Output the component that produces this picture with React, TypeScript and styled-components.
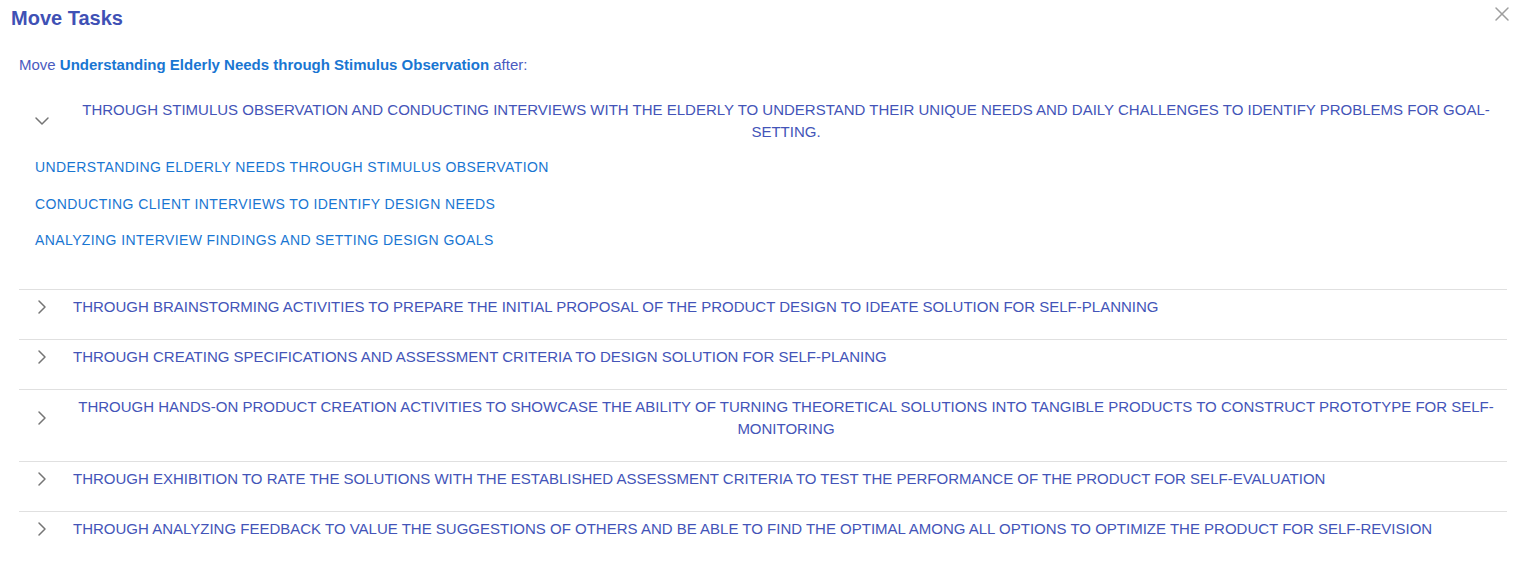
import React, { useState } from 'react';
import styled, { createGlobalStyle } from 'styled-components';
import { ChevronRight, X } from 'lucide-react';

const GlobalStyle = createGlobalStyle`
  body {
    margin: 0;
    background: #fff;
    font-family: "Liberation Sans", Arial, sans-serif;
  }
`;

type Group = {
  id: number;
  title: string;
  tasks: string[];
};

const groups: Group[] = [
  {
    id: 1,
    title:
      'Through stimulus observation and conducting interviews with the elderly to understand their unique needs and daily challenges to identify problems for goal-setting.',
    tasks: [
      'Understanding Elderly Needs through Stimulus Observation',
      'Conducting Client Interviews to Identify Design Needs',
      'Analyzing Interview Findings and Setting Design Goals',
    ],
  },
  {
    id: 2,
    title:
      'Through brainstorming activities to prepare the initial proposal of the product design to ideate solution for self-planning',
    tasks: [],
  },
  {
    id: 3,
    title: 'Through creating specifications and assessment criteria to design solution for self-planing',
    tasks: [],
  },
  {
    id: 4,
    title:
      'Through hands-on product creation activities to showcase the ability of turning theoretical solutions into tangible products to construct prototype for self-monitoring',
    tasks: [],
  },
  {
    id: 5,
    title:
      'Through exhibition to rate the solutions with the established assessment criteria to test the performance of the product for self-evaluation',
    tasks: [],
  },
  {
    id: 6,
    title:
      'Through analyzing feedback to value the suggestions of others and be able to find the optimal among all options to optimize the product for self-revision',
    tasks: [],
  },
];

const App = () => {
  const [open, setOpen] = useState<number | null>(1);

  return (
    <>
      <GlobalStyle />
      <Dialog>
        <Header>
          <Title>Move Tasks</Title>
          <CloseButton aria-label="close">
            <X size={24} strokeWidth={1.5} />
          </CloseButton>
        </Header>
        <Body>
          <Intro>
            Move <strong>Understanding Elderly Needs through Stimulus Observation</strong> after:
          </Intro>
          <Accordion>
            {groups.map((g, idx) => (
              <Panel key={g.id} first={idx === 0}>
                <Summary onClick={() => setOpen(open === g.id ? null : g.id)}>
                  <Chevron expanded={open === g.id}>
                    <ChevronRight size={24} strokeWidth={1.5} />
                  </Chevron>
                  <SummaryText>{g.title}</SummaryText>
                </Summary>
                {open === g.id && (
                  <Details>
                    {g.tasks.map((t, i) => (
                      <TaskItem key={i}>{t}</TaskItem>
                    ))}
                  </Details>
                )}
              </Panel>
            ))}
          </Accordion>
        </Body>
      </Dialog>
    </>
  );
};

const Dialog = styled.div`
  width: 100%;
  background: #fff;
`;

const Header = styled.div`
  display: flex;
  justify-content: space-between;
  align-items: flex-start;
  padding: 2px 6px 0 11px;
`;

const Title = styled.h2`
  margin: 4px 0 0;
  font-size: 20px;
  line-height: 24px;
  font-weight: bold;
  color: #3f51b5;
`;

const CloseButton = styled.button`
  border: none;
  background: none;
  padding: 0;
  width: 24px;
  height: 24px;
  color: #9e9e9e;
  cursor: pointer;
  display: flex;
`;

const Body = styled.div`
  padding: 25px 13px 0 19px;
`;

const Intro = styled.div`
  font-size: 15px;
  line-height: 20px;
  color: #4a5bbf;

  strong {
    color: #1976d2;
  }
`;

const Accordion = styled.div`
  margin-top: 18px;
`;

const Panel = styled.div<{ first: boolean }>`
  border-top: ${(p) => (p.first ? 'none' : '1px solid #e0e0e0')};
  padding-bottom: 17px;
`;

const Summary = styled.div`
  display: flex;
  align-items: center;
  gap: 19px;
  padding: 6px 8px 4px 11px;
  cursor: pointer;
`;

const Chevron = styled.span<{ expanded: boolean }>`
  flex: 0 0 24px;
  height: 22px;
  display: flex;
  align-items: center;
  color: #757575;
  transform: rotate(${(p) => (p.expanded ? '90deg' : '0deg')});
`;

const SummaryText = styled.div`
  font-size: 15px;
  line-height: 22px;
  color: #4354b8;
  text-transform: uppercase;
  text-align: center;
`;

const Details = styled.div`
  padding: 2px 16px 13px;
`;

const TaskItem = styled.div`
  font-size: 14px;
  line-height: 16.5px;
  letter-spacing: 0.4px;
  padding: 10px 0;
  color: #1976d2;
  text-transform: uppercase;
  cursor: pointer;
`;

export default App;
